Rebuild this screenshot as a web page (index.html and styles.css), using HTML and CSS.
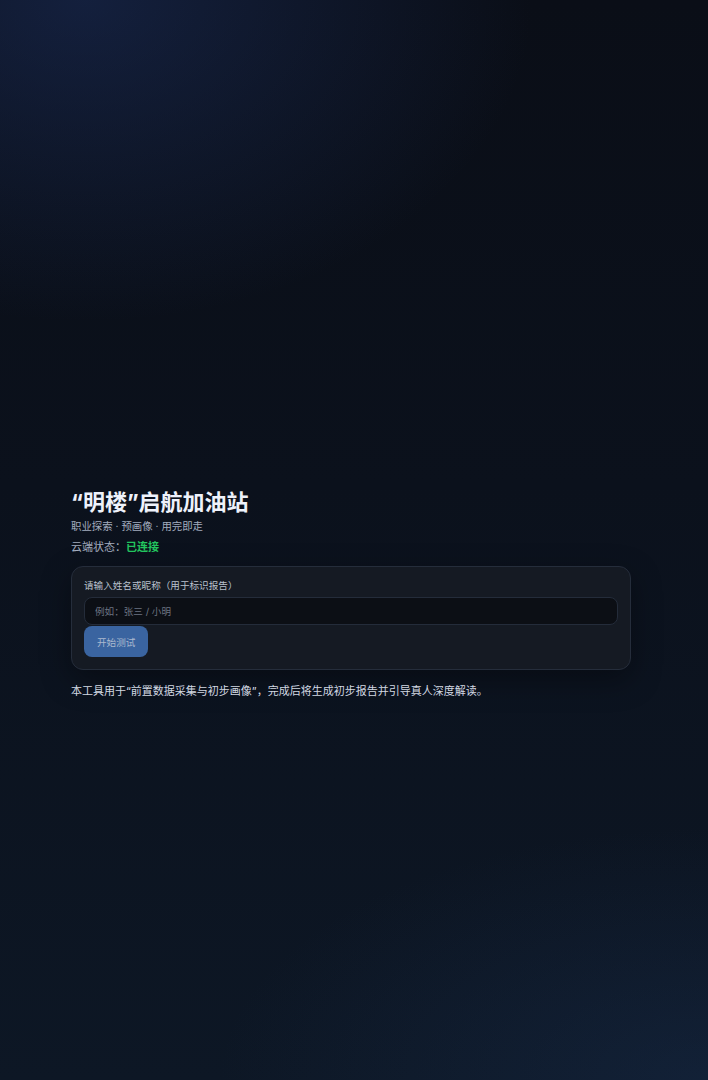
FILE: index.html
```html
<!DOCTYPE html>
<html lang="zh-CN">
<head>
<meta charset="utf-8">
<title>“明楼”启航加油站</title>
<link rel="stylesheet" href="styles.css">
</head>
<body>
<main class="page">
  <h1 class="title">“明楼”启航加油站</h1>
  <p class="subtitle">职业探索 · 预画像 · 用完即走</p>
  <p class="status">云端状态：<b class="status-ok">已连接</b></p>
  <section class="card">
    <label class="label" for="name">请输入姓名或昵称（用于标识报告）</label>
    <input class="input" id="name" type="text" placeholder="例如：张三 / 小明">
    <button class="btn" type="button">开始测试</button>
  </section>
  <p class="note">本工具用于“前置数据采集与初步画像”，完成后将生成初步报告并引导真人深度解读。</p>
</main>
</body>
</html>
```
FILE: styles.css
```css
html, body {
  margin: 0;
  padding: 0;
}
body {
  min-height: 100vh;
  font-family: Inter, "Noto Sans CJK SC", sans-serif;
  color: #dfe6f2;
  background:
    radial-gradient(640px 460px at 12% 0%, rgba(34, 58, 118, 0.40), rgba(34, 58, 118, 0) 70%),
    radial-gradient(700px 360px at 100% 100%, rgba(30, 56, 96, 0.30), rgba(30, 56, 96, 0) 70%),
    linear-gradient(180deg, #0a0e17 0%, #0b111c 45%, #0d1725 100%);
}
.page {
  width: 560px;
  margin-left: 71px;
  padding-top: 486px;
  padding-bottom: 40px;
}
.title {
  margin: 0;
  font-size: 22px;
  line-height: 32px;
  font-weight: 700;
  color: #eef2fb;
}
.subtitle {
  margin: 1px 0 0;
  font-size: 10.4px;
  line-height: 16px;
  color: #a3adbf;
}
.status {
  margin: 4px 0 0;
  font-size: 11px;
  line-height: 16px;
  color: #a3adbf;
}
.status-ok {
  color: #22c55e;
  font-weight: 700;
}
.card {
  margin-top: 11px;
  padding: 12px;
  border: 1px solid #252d3b;
  border-radius: 12px;
  background: #151a23;
  box-shadow: 0 10px 30px rgba(0, 0, 0, 0.35);
  display: flex;
  flex-direction: column;
  align-items: flex-start;
}
.label {
  font-size: 9.6px;
  line-height: 14px;
  color: #b9c1cd;
}
.input {
  margin-top: 4px;
  box-sizing: border-box;
  width: 100%;
  height: 28px;
  padding: 0 10px;
  border: 1px solid #242c3a;
  border-radius: 8px;
  background: #0c0f15;
  color: #dfe6f2;
  font-family: inherit;
  font-size: 9.6px;
  outline: none;
}
.input::placeholder {
  color: #6c7482;
}
.btn {
  margin-top: 1px;
  box-sizing: border-box;
  height: 31px;
  padding: 0 13px;
  border: 0;
  border-radius: 8px;
  background: #3a64a0;
  color: #abb9cf;
  font-family: inherit;
  font-size: 9.6px;
  cursor: pointer;
}
.note {
  margin: 13px 0 0;
  font-size: 11px;
  line-height: 16px;
  color: #d3d9e3;
}
```
